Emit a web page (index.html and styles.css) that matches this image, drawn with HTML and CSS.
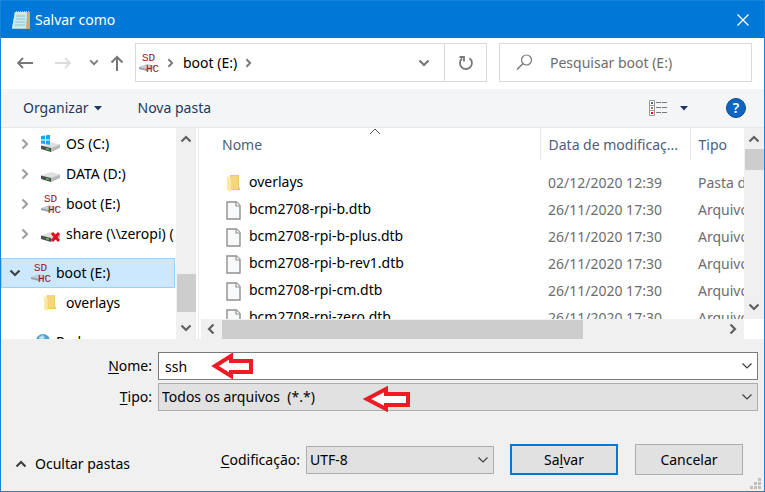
FILE: index.html
```html
<!DOCTYPE html>
<html lang="pt-BR">
<head>
<meta charset="utf-8">
<meta name="viewport" content="width=device-width, initial-scale=1">
<title>Salvar como</title>
<link rel="stylesheet" href="styles.css">
</head>
<body>
<svg class="sprite" aria-hidden="true">
  <symbol id="down" viewBox="0 0 12 8"><path d="M1.500 1.500 6 6l4.500-4.500" fill="none" stroke="currentColor" stroke-width="2.200"/></symbol>
  <symbol id="thin-down" viewBox="0 0 12 8"><path d="M1.500 1.500 6 6l4.500-4.500" fill="none" stroke="currentColor" stroke-width="1.200"/></symbol>
  <symbol id="up" viewBox="0 0 12 8"><path d="M1.500 6.500 6 2l4.500 4.500" fill="none" stroke="currentColor" stroke-width="2.200"/></symbol>
  <symbol id="right" viewBox="0 0 8 12"><path d="M1.500 1.500 6 6l-4.500 4.500" fill="none" stroke="currentColor" stroke-width="2.200"/></symbol>
  <symbol id="left" viewBox="0 0 8 12"><path d="M6.500 1.500 2 6l4.500 4.500" fill="none" stroke="currentColor" stroke-width="2.200"/></symbol>
  <symbol id="triangle" viewBox="0 0 8 5"><path d="M0 0h8L4 4.500z" fill="currentColor"/></symbol>
  <symbol id="drive" viewBox="0 0 21 20">
    <path d="M1 11.500 11 8l9 2.500-9 4z" fill="#e0e0e0"/>
    <path d="M1 11.500v3.500l10 3v-4z" fill="#4c4c4c"/>
    <path d="M11 14v4l9-4v-3.500z" fill="#b8b8b8"/>
    <path d="M6 14.500 9 15.500" stroke="#3fd03f" stroke-width="1.500"/>
  </symbol>
  <symbol id="windows" viewBox="0 0 10 10"><path d="M0 1l4-.6v4.100H0zM5 .3 9-.2v4.700H5zM0 5.500h4v3.600L0 8.500zM5 5.500h4v4.200l-4-.5z" fill="#10adea"/></symbol>
  <symbol id="card" viewBox="0 0 21 22">
    <path d="M1 15l8-3 9 2-7 5-10-2z" fill="#c5cdd6"/>
    <path d="M1 15v2l8 2v-2z" fill="#98a3ae"/>
  </symbol>
  <symbol id="folder" viewBox="0 0 13 18">
    <path d="M3 0h9v12l1 1v2H3z" fill="#efc85c"/>
    <path d="M4 1h7v13H4z" fill="#f5d679"/>
    <path d="M0 1l4 2v14.500L0 15z" fill="#fde9a4"/>
  </symbol>
  <symbol id="file" viewBox="0 0 15 19">
    <path d="M1 1h9.500L14 4.500V18H1z" fill="#f8f9fa" stroke="#909090" stroke-width="1.400"/>
    <path d="M10 1v4h4" fill="#fff" stroke="#909090" stroke-width="1.200"/>
  </symbol>
</svg>

<main class="dialog">
  <header class="titlebar">
    <svg class="notepad" viewBox="0 0 20 20">
      <path d="M4 1h14l1 18H1z" fill="#9fd0dc"/><path d="M16 1l3 1v17h-4z" fill="#c9ac72"/>
      <path d="M4 2h12l-1 16H1z" fill="#c7e9ef"/>
      <path d="M5 6h9M5 9h9M4 12h10M4 15h10" stroke="#8fc4d0"/>
      <path d="M4 1h13" stroke="#51656b" stroke-width="2" stroke-dasharray="1 1"/>
    </svg>
    <h1>Salvar como</h1>
    <button class="close" aria-label="Fechar"><svg width="12" height="12"><path d="M.5.5l11 11M11.500.5l-11 11" stroke="#fff" stroke-width="1.300"/></svg></button>
  </header>

  <nav class="navbar">
    <div class="history">
      <button aria-label="Voltar"><svg width="16" height="12"><path d="M1 6h15M6 1 1 6l5 5" fill="none" stroke="#777" stroke-width="1.800"/></svg></button>
      <button aria-label="Avançar" disabled><svg width="16" height="12"><path d="M0 6h15M10 1l5 5-5 5" fill="none" stroke="#dcdcdc" stroke-width="1.800"/></svg></button>
      <button class="recent" aria-label="Locais recentes"><svg width="10" height="7"><use href="#down"/></svg></button>
      <button class="parent" aria-label="Acima"><svg width="14" height="16"><path d="M7 16V2M1.500 7.500 7 2l5.500 5.500" fill="none" stroke="#777" stroke-width="2"/></svg></button>
    </div>
    <div class="address">
      <svg width="21" height="22"><use href="#card"/><text x="4" y="9" class="card-text">SD</text><text x="8" y="20" class="card-text">HC</text></svg>
      <svg class="crumb" width="7" height="10"><use href="#right"/></svg>
      <a href="#boot">boot (E:)</a>
      <svg class="crumb" width="7" height="10"><use href="#right"/></svg>
      <button class="drop" aria-label="Locais anteriores"><svg width="12" height="8"><use href="#down"/></svg></button>
      <button class="refresh" aria-label="Atualizar"><svg width="16" height="16" viewBox="0 0 16 16"><path d="M11.500 3.200A6 6 0 1 1 4 3.500M1.500 2H6v4.500" fill="none" stroke="#777" stroke-width="1.800"/></svg></button>
    </div>
    <label class="search">
      <svg width="17" height="17"><circle cx="10.500" cy="6" r="5" fill="none" stroke="#777" stroke-width="1.200"/><path d="M7 9.500 1 15.500" stroke="#777" stroke-width="1.400"/></svg>
      <input type="search" aria-label="Pesquisar" placeholder="Pesquisar boot (E:)">
    </label>
  </nav>

  <div class="toolbar">
    <button>Organizar <svg width="8" height="5"><use href="#triangle"/></svg></button>
    <button class="new">Nova pasta</button>
    <button class="view" aria-label="Exibição">
      <svg width="19" height="17"><path d="M.5.5h5v15h-5zM.5 5.500h5M.5 10.500h5" fill="#fff" stroke="#999"/><path d="M2 3h2" stroke="#3b78a8" stroke-width="2"/><path d="M2 8h2" stroke="#b17a2a" stroke-width="2"/><path d="M2 13h2" stroke="#d11" stroke-width="2"/><path d="M7 2.500h11M7 7.500h11M7 12.500h11" stroke="#777" stroke-dasharray="5 1"/></svg>
      <svg width="8" height="5"><use href="#triangle"/></svg>
    </button>
    <button class="help" aria-label="Ajuda">?</button>
  </div>

  <section class="browser">
    <div class="sidebar">
      <ul class="tree">
        <li class="child"><span class="toggle"><svg width="8" height="12"><use href="#right"/></svg></span><svg class="icon" viewBox="0 0 21 20"><use href="#drive"/><use href="#windows" x="1" y="1" width="10" height="10"/></svg>OS (C:)</li>
        <li class="child"><span class="toggle"><svg width="8" height="12"><use href="#right"/></svg></span><svg class="icon"><use href="#drive"/></svg>DATA (D:)</li>
        <li class="child"><span class="toggle"><svg width="8" height="12"><use href="#right"/></svg></span><svg class="icon"><use href="#card"/><text x="4" y="9" class="card-text">SD</text><text x="8" y="20" class="card-text">HC</text></svg>boot (E:)</li>
        <li class="child"><span class="toggle"><svg width="8" height="12"><use href="#right"/></svg></span><svg class="icon" viewBox="0 0 21 20"><use href="#drive"/><path d="M12 9l7 8M19 9l-7 8" stroke="#e01020" stroke-width="3"/></svg>share (\\zeropi) (</li>
        <li class="group selected"><span class="toggle"><svg width="12" height="8"><use href="#down"/></svg></span><svg class="icon"><use href="#card"/><text x="4" y="9" class="card-text">SD</text><text x="8" y="20" class="card-text">HC</text></svg>boot (E:)</li>
        <li class="child"><span class="toggle"></span><svg class="icon" viewBox="0 0 21 20"><use href="#folder" x="4" y="2" width="12" height="17"/></svg>overlays</li>
        <li class="group"><span class="toggle"></span><svg class="icon" viewBox="0 0 21 20"><circle cx="13" cy="9" r="7" fill="#4aa3d0"/><path d="M9 5l4-2 2 3-5 3z" fill="#b5dfef"/><path d="M3 12h12v7H3z" fill="#2c78b5"/></svg>Rede</li>
      </ul>
      <div class="vscroll"><svg width="12" height="8"><use href="#up"/></svg><span class="track"></span><span class="thumb"></span><svg width="12" height="8"><use href="#down"/></svg></div>
    </div>
    <div class="files">
      <div class="listing">
        <table>
          <colgroup><col><col class="date"><col class="type"></colgroup>
          <thead><tr><th>Nome<svg class="sort" width="12" height="7" viewBox="0 0 12 7"><path d="M1 6l5-5 5 5" fill="none" stroke="#555"/></svg></th><th>Data de modificaç...</th><th>Tipo</th></tr></thead>
          <tbody>
            <tr><td><svg width="13" height="18"><use href="#folder"/></svg>overlays</td><td>02/12/2020 12:39</td><td>Pasta de arquivos</td></tr>
            <tr><td><svg width="15" height="19"><use href="#file"/></svg>bcm2708-rpi-b.dtb</td><td>26/11/2020 17:30</td><td>Arquivo DTB</td></tr>
            <tr><td><svg width="15" height="19"><use href="#file"/></svg>bcm2708-rpi-b-plus.dtb</td><td>26/11/2020 17:30</td><td>Arquivo DTB</td></tr>
            <tr><td><svg width="15" height="19"><use href="#file"/></svg>bcm2708-rpi-b-rev1.dtb</td><td>26/11/2020 17:30</td><td>Arquivo DTB</td></tr>
            <tr><td><svg width="15" height="19"><use href="#file"/></svg>bcm2708-rpi-cm.dtb</td><td>26/11/2020 17:30</td><td>Arquivo DTB</td></tr>
            <tr><td><svg width="15" height="19"><use href="#file"/></svg>bcm2708-rpi-zero.dtb</td><td>26/11/2020 17:30</td><td>Arquivo DTB</td></tr>
          </tbody>
        </table>
        <div class="vscroll"><svg width="12" height="8"><use href="#up"/></svg><span class="thumb"></span><span class="track"></span><svg width="12" height="8"><use href="#down"/></svg></div>
      </div>
      <div class="hscroll"><svg width="8" height="12"><use href="#left"/></svg><span class="thumb"></span><span class="track"></span><svg width="8" height="12"><use href="#right"/></svg></div>
    </div>
  </section>

  <form class="form">
    <div class="fields">
      <label for="name"><u>N</u>ome:</label>
      <div class="field">
        <input id="name" type="text" value="ssh">
        <svg class="caret" width="12" height="8"><use href="#thin-down"/></svg>
        <svg class="mark name-mark" width="44" height="26"><path d="M4 13 20 3v5h20v11H20v4z" fill="#fff" stroke="#ed1c24" stroke-width="4"/></svg>
      </div>
      <label for="type"><u>T</u>ipo:</label>
      <div class="field">
        <select id="type"><option>Todos os arquivos&nbsp; (*.*)</option></select>
        <svg class="caret" width="12" height="8"><use href="#thin-down"/></svg>
        <svg class="mark type-mark" width="48" height="26"><path d="M4 13 23 3v5h22v11H23v4z" fill="#fff" stroke="#ed1c24" stroke-width="4"/></svg>
      </div>
    </div>
    <div class="actions">
      <button type="button" class="hide"><svg width="12" height="8"><use href="#up"/></svg>Ocultar pastas</button>
      <label for="encoding"><u>C</u>odificação:</label>
      <div class="field encoding">
        <select id="encoding"><option>UTF-8</option></select>
        <svg class="caret" width="12" height="8"><use href="#thin-down"/></svg>
      </div>
      <button type="button" class="push primary"><span>Sa<u>l</u>var</span></button>
      <button type="button" class="push">Cancelar</button>
    </div>
    <svg class="grip" width="11" height="11"><path d="M8 0h3v3H8zM4 4h3v3H4zM8 4h3v3H8zM0 8h3v3H0zM4 8h3v3H4zM8 8h3v3H8z" fill="#bfbfbf"/></svg>
  </form>
</main>
</body>
</html>
```
FILE: styles.css
```css
* { box-sizing: border-box; }

body {
  margin: 0;
  font: 14px/20px "Noto Sans", "Open Sans", sans-serif;
  color: #000;
}

button, input, select { font: inherit; color: inherit; }

button {
  border: 0;
  padding: 0;
  background: none;
}

svg { flex: none; }
u { text-underline-offset: 2px; }

.sprite { position: absolute; width: 0; height: 0; }

.card-text {
  font: 11px "Liberation Mono", monospace;
  fill: #8b1a1a;
}

.dialog {
  display: flex;
  flex-direction: column;
  height: 100vh;
  border: 1px solid #1883d7;
  background: #f0f0f0;
}

.titlebar {
  display: flex;
  align-items: center;
  gap: 4px;
  height: 37px;
  padding: 0 15px 0 10px;
  background: #0078d7;
  color: #fff;
}

.titlebar h1 { flex: 1; margin: 0; font-size: 14px; font-weight: 400; }
.notepad { width: 20px; height: 20px; }
.close { display: flex; }

.navbar {
  display: grid;
  grid-template-columns: 134px minmax(0, 352fr) minmax(0, 265fr);
  align-items: center;
  height: 51px;
  padding: 0 12px 2px 0;
  background: #fff;
}

.history { display: flex; align-items: center; padding-left: 16px; gap: 22px; color: #777; }
.history button { display: flex; }
.history .recent { margin-left: -4px; }
.history .parent { margin-left: -11px; }

.address {
  display: flex;
  align-items: center;
  height: 39px;
  border: 1px solid #d9d9d9;
  padding-left: 2px;
}

.address a { color: #000; text-decoration: none; }
.crumb { margin: 0 9px 0 8px; color: #777; }
.drop { margin: 0 14px 0 auto; color: #777; display: flex; }

.refresh {
  display: flex;
  align-items: center;
  justify-content: center;
  width: 42px;
  height: 100%;
  border-left: 1px solid #d9d9d9;
}

.search {
  display: flex;
  align-items: center;
  height: 39px;
  margin-left: 12px;
  border: 1px solid #d9d9d9;
  padding-left: 16px;
  gap: 17px;
}

.search input {
  flex: 1;
  min-width: 0;
  border: 0;
  padding: 0;
  background: none;
}

.search input::placeholder { color: #6d6d6d; opacity: 1; }

.toolbar {
  display: flex;
  align-items: center;
  height: 39px;
  padding: 0 18px 0 22px;
  border-bottom: 1px solid #e6e8ea;
  background: #f4f5f7;
  color: #1e395b;
}

.toolbar button { display: flex; align-items: center; gap: 5px; }
.toolbar .new { margin-left: 36px; }
.toolbar .view { margin-left: auto; gap: 12px; }

.toolbar .help {
  justify-content: center;
  width: 20px;
  height: 20px;
  margin-left: 38px;
  border: 1px solid #104a86;
  border-radius: 50%;
  background: #0b66c3;
  color: #fff;
  font-weight: 600;
}

.browser {
  display: flex;
  flex: 1;
  min-height: 0;
  background: #fff;
}

.sidebar { display: flex; width: 195px; min-height: 0; }

.tree {
  flex: 1;
  min-width: 0;
  margin: 0 1px 0 0;
  padding: 1px 0 0;
  list-style: none;
  overflow: hidden;
}

.tree li {
  display: flex;
  align-items: center;
  height: 30px;
  white-space: pre;
  overflow: hidden;
}

.tree .child { padding-left: 14px; }
.tree .group { padding-left: 4px; margin-top: 9px; }
.tree .selected { padding-left: 3px; border: 1px solid #99d1ff; background: #cce8ff; }
.tree .icon { width: 21px; height: 22px; margin: 0 5px; }
.toggle { display: flex; flex: none; justify-content: center; width: 20px; color: #a0a0a0; }
.selected .toggle { color: #404040; }

.vscroll {
  display: flex;
  flex-direction: column;
  align-items: center;
  flex: none;
  width: 20px;
  padding: 7px 0;
  background: #f0f0f0;
  color: #606060;
}

.track { flex: 1; }
.thumb { background: #cdcdcd; }
.vscroll .thumb { width: 19px; height: 38px; margin-bottom: 12px; }

.files {
  display: flex;
  flex-direction: column;
  flex: 1;
  min-width: 0;
  margin-left: 2px;
  border-left: 1px solid #ececec;
}

.listing { display: flex; flex: 1; min-height: 0; overflow: hidden; }
.listing table { flex: 1; min-width: 0; width: 0; align-self: flex-start; table-layout: fixed; border-collapse: collapse; }
.date { width: 150px; }
.type { width: 54px; }

th, td { padding: 0 0 0 8px; text-align: left; white-space: nowrap; overflow: hidden; }
th { position: relative; height: 32px; padding-top: 2px; font-weight: 400; color: #4c607a; border-right: 1px solid #e5e5e5; }
th:first-child { padding-left: 23px; }
th:last-child { border: 0; }
.sort { position: absolute; top: 0; left: 50%; }
td { height: 27px; color: #6d6d6d; }
td:first-child { padding-left: 27px; color: #000; }
td svg { width: 15px; margin-right: 8px; vertical-align: middle; }
tbody::before { content: ""; display: block; height: 9px; }

.listing .vscroll { padding-bottom: 8px; }
.listing .thumb { height: 21px; margin: 6px 0 0; }

.hscroll {
  display: flex;
  align-items: center;
  flex: none;
  height: 20px;
  margin: 0 20px 0 2px;
  padding: 0 7px 0 6px;
  background: #f0f0f0;
  color: #606060;
}

.hscroll .thumb { flex: 360; height: 19px; margin-left: 7px; }
.hscroll .track { flex: 146; }

.form { position: relative; padding: 13px 6px 16px 14px; }

.fields {
  display: grid;
  grid-template-columns: 137px 1fr;
  gap: 3px 6px;
  align-items: center;
}

.fields label { text-align: right; }
.field { position: relative; display: flex; }

.field input, .field select {
  width: 100%;
  height: 28px;
  margin: 0;
  border: 1px solid #adadad;
  border-radius: 0;
  padding: 0 24px 0 3px;
  background: #e1e1e1;
  appearance: none;
}

.field input { padding-left: 6px; border-color: #7a7a7a; background: #fff; }
.caret { position: absolute; right: 5px; top: 10px; color: #404040; pointer-events: none; }
.mark { position: absolute; pointer-events: none; }
.name-mark { left: 53px; top: 1px; }
.type-mark { left: 205px; top: 3px; }

.actions {
  display: flex;
  align-items: center;
  margin-top: 33px;
  padding-right: 15px;
}

.hide { display: flex; align-items: center; gap: 8px; margin-right: auto; padding-top: 8px; color: #000; }
.hide svg { color: #404040; }
.encoding { width: 188px; margin: 0 16px 0 6px; }

.push {
  width: 108px;
  height: 31px;
  border: 1px solid #adadad;
  background: #e1e1e1;
}

.primary { margin-right: 17px; border: 2px solid #0078d7; }
.grip { position: absolute; right: 3px; bottom: 2px; }
```
